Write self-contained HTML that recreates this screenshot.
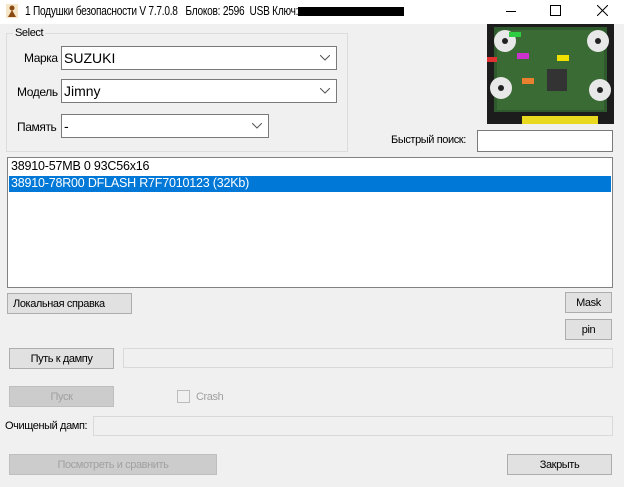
<!DOCTYPE html><html><head><meta charset="utf-8"><style>
body{margin:0;width:624px;height:487px;background:#f0f0f0;font-family:"Liberation Sans",sans-serif;position:relative;overflow:hidden}
.a{position:absolute}
.t{font-size:11px;letter-spacing:-0.4px;color:#000;white-space:nowrap}
.btn{position:absolute;background:#e1e1e1;border:1px solid #adadad;box-sizing:border-box;font-size:11px;letter-spacing:-0.4px;display:flex;align-items:center;justify-content:center}
.dis{background:#cccccc;border-color:#bfbfbf;color:#a0a0a0}
.tb{position:absolute;background:#f0f0f0;border:1px solid #d9d9d9;box-sizing:border-box}
.cb{position:absolute;background:#fff;border:1px solid #7a7a7a;box-sizing:border-box;font-size:14px;padding-left:2px;line-height:22px}
.cb svg{position:absolute;right:6px;top:8px}
</style></head><body>
<div class="a" style="left:0;top:0;width:624px;height:24px;background:#fff"></div>
<svg class="a" style="left:6px;top:4px" width="12" height="14"><rect x="0" y="0" width="12" height="14" fill="#f5e6c8"/><circle cx="6" cy="4" r="2.5" fill="#8b4a12"/><path d="M2 13 L6 6 L10 13Z" fill="#8b4a12"/></svg>
<div class="a t" style="left:25px;top:4px;font-size:12.5px;letter-spacing:-0.3px;transform:scaleX(0.81);transform-origin:0 0">1 Подушки безопасности V 7.7.0.8 &nbsp; Блоков: 2596 &nbsp;USB Ключ:</div>
<div class="a" style="left:298px;top:7px;width:106px;height:9px;background:#000"></div>
<div class="a" style="left:506px;top:11px;width:10px;height:1px;background:#000"></div>
<div class="a" style="left:550px;top:5px;width:9px;height:9px;border:1px solid #000"></div>
<svg class="a" style="left:597px;top:5px" width="11" height="11"><path d="M0 0L11 11M11 0L0 11" stroke="#000" stroke-width="1"/></svg>
<div class="a" style="left:6px;top:33px;width:340px;height:117px;border:1px solid #dcdcdc"></div>
<div class="a t" style="left:13px;top:27px;background:#f0f0f0;padding:0 2px">Select</div>
<div class="a t" style="left:24px;top:51px;font-size:12px">Марка</div>
<div class="cb" style="left:61px;top:46px;width:276px;height:24px">SUZUKI<svg width="10" height="6"><path d="M0 0L5 5L10 0" fill="none" stroke="#555"/></svg></div>
<div class="a t" style="left:17px;top:85px;font-size:12px">Модель</div>
<div class="cb" style="left:61px;top:79px;width:276px;height:24px">Jimny<svg width="10" height="6"><path d="M0 0L5 5L10 0" fill="none" stroke="#555"/></svg></div>
<div class="a t" style="left:17px;top:120px;font-size:12px">Память</div>
<div class="cb" style="left:61px;top:114px;width:208px;height:24px">-<svg width="10" height="6"><path d="M0 0L5 5L10 0" fill="none" stroke="#555"/></svg></div>
<svg class="a" style="left:487px;top:24px" width="127" height="100">
<rect width="127" height="100" fill="#1c1c1c"/>
<rect x="7" y="3" width="113" height="85" fill="#2f5a2e"/>
<rect x="10" y="6" width="107" height="80" fill="#3a6b35"/>
<circle cx="18" cy="17" r="11" fill="#e8e8e8"/><circle cx="18" cy="17" r="3" fill="#222"/>
<circle cx="111" cy="17" r="11" fill="#e8e8e8"/><circle cx="111" cy="17" r="3" fill="#222"/>
<circle cx="14" cy="64" r="11" fill="#e8e8e8"/><circle cx="14" cy="64" r="3" fill="#222"/>
<circle cx="113" cy="66" r="11" fill="#e8e8e8"/><circle cx="113" cy="66" r="3" fill="#222"/>
<rect x="60" y="45" width="20" height="22" fill="#333"/>
<rect x="22" y="8" width="12" height="5" fill="#2ecc40"/>
<rect x="0" y="33" width="10" height="5" fill="#e03030"/>
<rect x="30" y="29" width="12" height="6" fill="#cc33cc"/>
<rect x="70" y="31" width="12" height="6" fill="#f0e000"/>
<rect x="35" y="54" width="12" height="6" fill="#e88030"/>
<rect x="35" y="92" width="76" height="8" fill="#e8d820"/>
</svg>
<div class="a t" style="left:391px;top:134px">Быстрый поиск:</div>
<div class="a" style="left:477px;top:130px;width:136px;height:22px;background:#fff;border:1px solid #7a7a7a;box-sizing:border-box"></div>
<div class="a" style="left:7px;top:157px;width:606px;height:131px;background:#fff;border:1px solid #828282;box-sizing:border-box"></div>
<div class="a" style="left:11px;top:159px;font-size:12.5px;letter-spacing:-0.2px">38910-57MB 0 93C56x16</div>
<div class="a" style="left:9px;top:176px;width:602px;height:16px;background:#0078d7"></div>
<div class="a" style="left:11px;top:176px;font-size:12.5px;letter-spacing:-0.2px;color:#fff">38910-78R00 DFLASH R7F7010123 (32Kb)</div>
<div class="btn" style="left:7px;top:293px;width:125px;height:21px;justify-content:flex-start;padding-left:5px">Локальная справка</div>
<div class="btn" style="left:565px;top:292px;width:47px;height:21px">Mask</div>
<div class="btn" style="left:565px;top:319px;width:47px;height:21px">pin</div>
<div class="btn" style="left:9px;top:348px;width:105px;height:21px">Путь к дампу</div>
<div class="tb" style="left:123px;top:348px;width:490px;height:20px"></div>
<div class="btn dis" style="left:9px;top:386px;width:105px;height:21px">Пуск</div>
<div class="a" style="left:177px;top:390px;width:13px;height:13px;border:1px solid #bcbcbc;box-sizing:border-box;background:#f0f0f0"></div>
<div class="a t" style="left:196px;top:391px;color:#a0a0a0">Crash</div>
<div class="a t" style="left:5px;top:420px">Очищеный дамп:</div>
<div class="tb" style="left:93px;top:416px;width:520px;height:20px"></div>
<div class="btn dis" style="left:9px;top:454px;width:208px;height:21px">Посмотреть и сравнить</div>
<div class="btn" style="left:507px;top:454px;width:105px;height:21px">Закрыть</div>
</body></html>
